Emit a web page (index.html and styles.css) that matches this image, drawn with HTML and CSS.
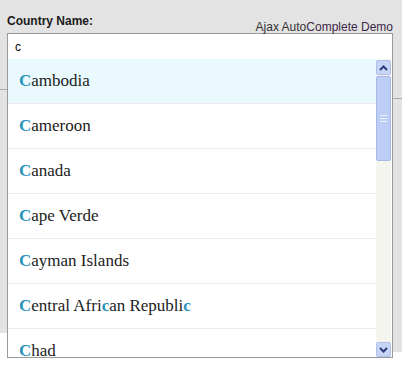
FILE: index.html
```html
<!DOCTYPE html>
<html lang="en">
<head>
  <meta charset="UTF-8" />
  <title>Ajax AutoComplete Demo</title>
  <link rel="stylesheet" href="styles.css">
</head>
<body>
  <div class="page">
    <span class="edge-line left"></span>
    <span class="edge-line right"></span>
    <div class="head">
      <span class="label">Country Name:</span>
      <span class="demo">Ajax Auto<a href="#">Complete Demo</a></span>
    </div>
    <div class="combo">
      <input type="text" value="c">
      <div class="suggestions">
        <ul class="items">
          <li class="selected"><b>C</b>ambodia</li>
          <li><b>C</b>ameroon</li>
          <li><b>C</b>anada</li>
          <li><b>C</b>ape Verde</li>
          <li><b>C</b>ayman Islands</li>
          <li><b>C</b>entral Afri<b>c</b>an Republi<b>c</b></li>
          <li><b>C</b>had</li>
        </ul>
        <div class="scrollbar">
          <div class="arrow">
            <svg width="9" height="6" viewBox="0 0 9 6"><path d="M1 5 L4.5 1.5 L8 5" fill="none" stroke="#2c3e78" stroke-width="2"/></svg>
          </div>
          <div class="thumb"><span class="grip"></span></div>
          <div class="track"></div>
          <div class="arrow">
            <svg width="9" height="6" viewBox="0 0 9 6"><path d="M1 1 L4.5 4.5 L8 1" fill="none" stroke="#2c3e78" stroke-width="2"/></svg>
          </div>
        </div>
      </div>
    </div>
  </div>
</body>
</html>
```

FILE: styles.css
```css
* { box-sizing: border-box; }
body {
  margin: 0; background: #fff;
  font-family: 'Liberation Sans', Arial, sans-serif;
}

.page {
  position: relative;
  height: 368px;
  padding: 13px 9px 0 7px;
  background:
    linear-gradient(to right, transparent 393px, #e3e3e3 393px) 0 333px / 100% 19px no-repeat,
    linear-gradient(#e3e3e3, #e3e3e3) 0 0 / 100% 333px no-repeat,
    #fff;
}
.edge-line {
  position: absolute; height: 1px; width: 8px;
  background: #a8a8a8;
}
.edge-line.left { left: 0; top: 89px; width: 7px; }
.edge-line.right { right: 0; top: 98px; width: 9px; }

.head {
  display: flex; justify-content: space-between;
  align-items: flex-start; height: 20px;
}
.label { font-size: 12px; font-weight: bold; color: #1a1a1a; padding-top: 1px; }
.demo { font-size: 12px; color: #333; padding-top: 7px; }
.demo a { color: #3b2747; text-decoration: none; }

.combo { width: 386px; }
.combo input {
  display: block; width: 100%; height: 26px;
  border: 1px solid #9a9a9a; border-bottom: none;
  background: #fff; padding: 0 7px;
  font: 12px 'Liberation Sans', Arial, sans-serif; color: #000;
  outline: none;
}

.suggestions {
  height: 299px;
  background: #fff; border: 1px solid #9a9a9a; border-top: none;
  display: flex; overflow: hidden;
}
.items {
  flex: 1; margin: 0; padding: 0;
  list-style: none;
}
.items li {
  height: 45px;
  padding-left: 11px;
  border-bottom: 1px solid #ececec;
  font: 17px 'Liberation Serif', 'Times New Roman', serif;
  line-height: 44px;
  color: #222;
}
.items li.selected { background: #e9f9fe; }
.items li b { color: #2a93bb; }

.scrollbar {
  width: 15px; margin-right: 1px; padding-top: 1px;
  display: flex; flex-direction: column;
  background: #f5f5ef;
}
.arrow {
  height: 15px; flex: none; display: flex;
  align-items: center; justify-content: center;
  background: #c6d4f6; border: 1px solid #b0c0e8;
  border-radius: 2px;
}
.thumb {
  height: 85px; flex: none; margin-top: 1px;
  background: #bccdf6; border: 1px solid #a6b8e6;
  border-radius: 2px;
  display: flex; align-items: center; justify-content: center;
}
.grip {
  width: 7px; height: 7px;
  border-top: 1px solid #eef2fc; border-bottom: 1px solid #eef2fc;
  background: linear-gradient(#eef2fc, #eef2fc) center / 100% 1px no-repeat;
}
.track { flex: 1; }
```
